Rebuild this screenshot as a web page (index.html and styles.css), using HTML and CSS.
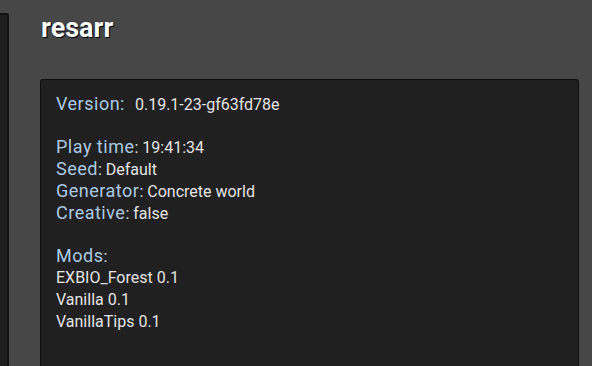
FILE: index.html
```html
<!DOCTYPE html>
<html>
<head>
<meta charset="utf-8">
<link rel="stylesheet" href="styles.css">
</head>
<body>
<div class="page">
  <div class="side"></div>
  <div class="main">
    <h1 class="title">resarr</h1>
    <div class="box">
      <div class="line"><span class="lbl">Version:</span><span class="val ver">0.19.1-23-gf63fd78e</span></div>
      <div class="blank"></div>
      <div class="line"><span class="lbl">Play time</span><span class="val">: 19:41:34</span></div>
      <div class="line"><span class="lbl">Seed</span><span class="val">: Default</span></div>
      <div class="line"><span class="lbl">Generator</span><span class="val">: Concrete world</span></div>
      <div class="line"><span class="lbl">Creative</span><span class="val">: false</span></div>
      <div class="blank"></div>
      <div class="line"><span class="lbl">Mods</span><span class="val">:</span></div>
      <div class="line"><span class="val">EXBIO_Forest 0.1</span></div>
      <div class="line"><span class="val">Vanilla 0.1</span></div>
      <div class="line"><span class="val">VanillaTips 0.1</span></div>
    </div>
  </div>
</div>
</body>
</html>
```
FILE: styles.css
```css
html, body {
  margin: 0;
  padding: 0;
  height: 100%;
  background: #474747;
  overflow: hidden;
  font-family: Roboto, "Liberation Sans", sans-serif;
}
.page {
  display: flex;
  height: 100%;
}
.side {
  width: 7px;
  margin-top: 13px;
  background: #1e1e1e;
  border: 2px solid #111;
  border-left: none;
  border-bottom: none;
  border-top-right-radius: 3px;
  flex: none;
}
.main {
  flex: 1;
  padding-left: 31px;
  padding-right: 13px;
  display: flex;
  flex-direction: column;
}
.title {
  margin: 11px 0 0 1px;
  font-size: 27px;
  font-weight: bold;
  color: #ffffff;
  line-height: 34px;
  text-shadow: 1px 1px 0 #000, 0 0 1px #000;
}
.box {
  margin-top: 34px;
  flex: 1;
  background: #202020;
  border: 1px solid #0e0e0e;
  border-bottom: none;
  border-radius: 3px 3px 0 0;
  padding: 13px 15px 12px;
}
.line {
  height: 22px;
  line-height: 22px;
  white-space: nowrap;
}
.blank {
  height: 21px;
}
.lbl {
  font-size: 18px;
  letter-spacing: 0.5px;
  color: #abcae2;
}
.val {
  font-size: 16px;
  color: #e4e4e4;
}
.ver {
  margin-left: 10px;
}
```
